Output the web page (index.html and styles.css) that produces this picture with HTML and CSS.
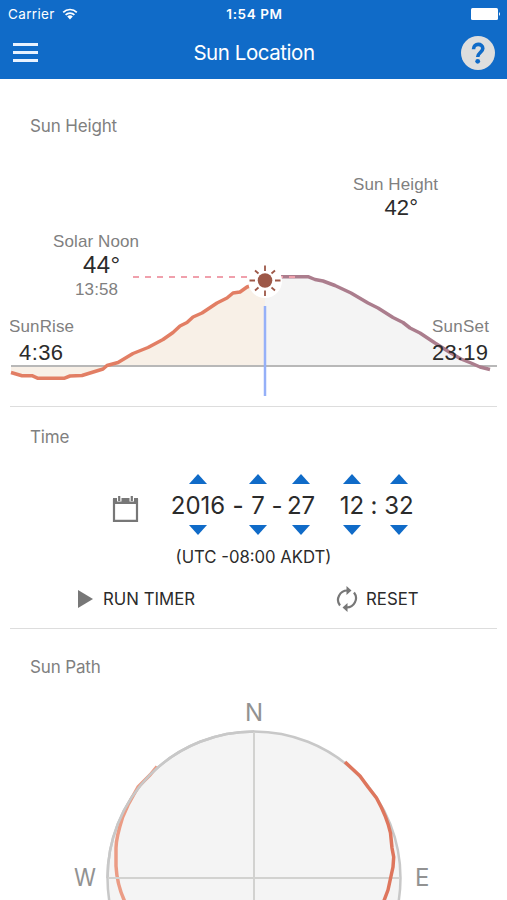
FILE: index.html
```html
<!DOCTYPE html>
<html lang="en">
<head>
    <meta charset="UTF-8">
    <meta name="viewport" content="width=device-width, initial-scale=1.0">
    <title>Sun Location</title>
    <link rel="stylesheet" href="styles.css">
</head>
<body>
    <header>
        <div class="status-bar">
            <div class="carrier">
                <span>Carrier</span>
                <svg width="16" height="12" viewBox="0 0 16 12">
                    <path d="M1.2 4.3a9.6 9.6 0 0 1 13.6 0M3.6 6.9a6.2 6.2 0 0 1 8.8 0" fill="none" stroke="#fff" stroke-width="1.7"/>
                    <path d="M5.2 8.6a4 4 0 0 1 5.6 0L8 11.4z" fill="#fff"/>
                </svg>
            </div>
            <span class="clock">1:54 PM</span>
            <svg class="battery" width="30" height="12" viewBox="0 0 30 12">
                <rect width="27" height="12" rx="1.5" fill="#fff"/>
                <path d="M28 4q2 2 0 4z" fill="#fff"/>
            </svg>
        </div>
        <nav class="nav-bar">
            <button class="menu-btn" aria-label="Menu"><span></span><span></span><span></span></button>
            <h1>Sun Location</h1>
            <button class="help-btn" aria-label="Help">
                <svg width="34" height="34" viewBox="0 0 34 34">
                    <circle cx="17" cy="17" r="17" fill="#dedede"/>
                    <path d="M12.500 13.200C12.500 6.800 21.800 7 21.800 12.500c0 3.500-4.800 4-5.100 8.500" fill="none" stroke="#106bc8" stroke-width="3.600"/>
                    <circle cx="16.700" cy="25.300" r="2.400" fill="#106bc8"/>
                </svg>
            </button>
        </nav>
    </header>

    <main>
        <section class="height-section">
            <h2>Sun Height</h2>
            <svg class="height-chart" width="487" height="256" viewBox="10 150 487 256">
                <!-- day area, before and after the current time -->
                <path class="area-past" d="M11 366V372L22 375.500 32 375.500 38 378.300H64L70 376 82 375.500 103 369 107 365.500 118 362.500 133 353.500 148 347.500 163 339.500 173 332.500 180 326 187 322.500 193 317 202 313 217 303 227 298 233 293 240 292 247 287 254 284.500H265V366z"/>
                <path class="area-next" d="M265 277H308L315 279.500 323 281 335 285.500 351 293 368 303 378 308 393 317.500 403 322.500 410 328 420 333 435 343 450 352.500 461 359 471 363 478 366H265z"/>
                <path class="horizon" d="M11 366H497"/>
                <path class="curve-past" d="M11 372.500L22 375.700 32 375.700 38 378.300H64L70 376 82 375.500 103 369 107 365.500 118 362.500 133 353.500 148 347.500 163 339.500 173 332.500 180 326 187 322.500 193 317 202 313 217 303 227 298 233 293 240 292 247 287 254 284.500"/>
                <path class="curve-next" d="M280 276.700H308L315 279.500 323 281 335 285.500 351 293 368 303 378 308 393 317.500 403 322.500 410 328 420 333 435 343 450 352.500 461 359 471 363 480 367 490 369.500"/>
                <path class="noon-line" d="M133 277H296"/>
                <path class="now-line" d="M265 306V396"/>
                <circle cx="265" cy="281" r="17" fill="#fff"/>
                <circle cx="265" cy="280.500" r="7.300" fill="#9d5848"/>
                <path class="rays" d="M265 265.500v5.500M265 290.500v5.500M249.500 280.500h5.500M275 280.500h5.500M255 270.500l3.500 3M275 270.500l-3.500 3M255 290.500l3.500-3M275 290.500l-3.500-3"/>
                <text class="label" x="353" y="190" textLength="85">Sun Height</text>
                <text class="value" x="384.500" y="215" textLength="33.500">42°</text>
                <text class="label" x="53" y="246.500" textLength="86">Solar Noon</text>
                <text class="value noon" x="83" y="273" textLength="37">44°</text>
                <text class="label" x="75" y="295" textLength="43">13:58</text>
                <text class="label" x="9" y="332" textLength="65">SunRise</text>
                <text class="value" x="19" y="360" textLength="44">4:36</text>
                <text class="label" x="432" y="332" textLength="57">SunSet</text>
                <text class="value" x="432" y="360" textLength="56">23:19</text>
            </svg>
        </section>

        <section class="time-section">
            <h2>Time</h2>
            <div class="picker">
                <svg class="calendar" width="27" height="28" viewBox="0 0 27 28">
                    <path d="M2 4V25.800H25V4" fill="none" stroke="#777" stroke-width="2.200"/>
                    <path d="M1 3h4v3.500h4.500V3h8v3.500H22V3h4v6H1z" fill="#777"/>
                    <path d="M7.200 1v5M19.800 1v5" stroke="#777" stroke-width="2.200"/>
                </svg>
                <div class="stepper year"><i class="up"></i><span>2016</span><i class="down"></i></div>
                <span class="sep wide">-</span>
                <div class="stepper month"><i class="up"></i><span>7</span><i class="down"></i></div>
                <span class="sep">-</span>
                <div class="stepper day"><i class="up"></i><span>27</span><i class="down"></i></div>
                <div class="stepper hour"><i class="up"></i><span>12</span><i class="down"></i></div>
                <span class="sep colon">:</span>
                <div class="stepper minute"><i class="up"></i><span>32</span><i class="down"></i></div>
            </div>
            <p class="timezone">(UTC -08:00 AKDT)</p>
            <div class="actions">
                <button class="run-btn">
                    <svg width="15" height="18" viewBox="0 0 15 18"><path d="M0 0L15 9 0 18z" fill="#777"/></svg>
                    <span>RUN TIMER</span>
                </button>
                <button class="reset-btn">
                    <svg width="22" height="28" viewBox="0 0 22 28">
                        <path d="M4 20.500A9.300 9.300 0 0 1 11.500 5.500M18 7.500A9.300 9.300 0 0 1 10.500 22.500" fill="none" stroke="#777" stroke-width="2.200"/>
                        <path d="M10.500 1l5 4.500-5 4.500zM11.500 18l-5 4.500 5 4.500z" fill="#777"/>
                    </svg>
                    <span>RESET</span>
                </button>
            </div>
        </section>

        <section class="path-section">
            <h2>Sun Path</h2>
            <svg class="path-chart" width="487" height="220" viewBox="10 680 487 220">
                <circle class="compass" cx="254" cy="878" r="146.500"/>
                <path class="track-set" d="M157 766.500L150 775 138 787 128 805 122.700 817Q116 838 116 848V866Q117 885 125 902"/>
                <path class="compass-top" d="M107.500 878A146.500 146.500 0 0 1 254 731.500"/>
                <path class="compass-axis" d="M254 732V900M108 878H400"/>
                <path class="track-rise" d="M345 762L360 776 368 787 376.500 798Q387 817 390.500 833L392 848 393.700 857 393 867 388 890 383.500 902"/>
                <text x="245" y="721" textLength="17">N</text>
                <text x="74" y="885.500" textLength="22" lengthAdjust="spacingAndGlyphs">W</text>
                <text x="415" y="885.500" textLength="14">E</text>
            </svg>
        </section>
    </main>
</body>
</html>
```
FILE: styles.css
```css
body {
    font-family: 'Inter', sans-serif;
    background: #fff;
    color: #2b2b2b;
    margin: 0;
    height: 900px;
    overflow: hidden;
}

button {
    background: none;
    border: none;
    padding: 0;
    font-family: inherit;
    color: inherit;
}

svg {
    display: block;
}

header {
    background: #106bc8;
    color: #fff;
    height: 79px;
}

.status-bar {
    display: grid;
    grid-template-columns: 1fr auto 1fr;
    align-items: center;
    height: 28px;
    padding: 0 6px 0 8px;
    font-size: 13.5px;
}

.carrier {
    display: flex;
    align-items: center;
    gap: 7px;
    letter-spacing: 0.35px;
}

.clock {
    font-size: 13.5px;
    font-weight: 600;
    letter-spacing: 0.6px;
}

.battery {
    justify-self: end;
}

.nav-bar {
    display: flex;
    align-items: center;
    justify-content: space-between;
    height: 49px;
    padding: 0 12px 0 13px;
}

.menu-btn {
    display: flex;
    flex-direction: column;
    gap: 5px;
    width: 34px;
}

.menu-btn span {
    width: 25px;
    height: 3px;
    background: #e8f2ff;
}

h1 {
    margin: 0;
    font-size: 20.5px;
    font-weight: 400;
    letter-spacing: -0.45px;
}

main {
    padding: 0 10px;
}

section {
    box-sizing: border-box;
}

h2 {
    margin: 0;
    padding-left: 20px;
    font-size: 17px;
    font-weight: 400;
    letter-spacing: -0.15px;
    line-height: 20px;
    color: #808080;
}

.height-section {
    height: 328px;
    padding-top: 37px;
    border-bottom: 1px solid #ddd;
}

.height-chart {
    margin-top: 14px;
}

.height-chart text {
    font-family: 'Liberation Sans', Arial, sans-serif;
}

.height-chart .label {
    font-size: 17px;
    fill: #808080;
}

.height-chart .value {
    font-size: 22px;
    fill: #2b2b2b;
}

.height-chart .noon {
    font-size: 24px;
}

.area-past {
    fill: #f8f0e7;
}

.area-next {
    fill: #f4f4f4;
}

.horizon {
    stroke: #b8b8b8;
    stroke-width: 2;
}

.noon-line {
    fill: none;
    stroke: #f0a0ac;
    stroke-width: 2;
    stroke-dasharray: 6 6;
}

.curve-past, .curve-next {
    fill: none;
    stroke: #e27e64;
    stroke-width: 3.5;
    stroke-linejoin: round;
}

.curve-next {
    stroke: #ab7d8d;
}

.now-line {
    stroke: #95b0f8;
    stroke-width: 2.5;
}

.rays {
    stroke: #9d5848;
    stroke-width: 1.8;
}

.time-section {
    height: 222px;
    padding-top: 20px;
    border-bottom: 1px solid #ddd;
}

.picker {
    display: flex;
    align-items: center;
    height: 61px;
    margin-top: 27px;
    padding-left: 102px;
    font-size: 24px;
}

.calendar {
    margin: 9px 31px 0 0;
}

.stepper {
    display: flex;
    flex-direction: column;
    align-items: center;
    justify-content: space-between;
    height: 61px;
    width: 26px;
    line-height: 30px;
}

.stepper span, .sep {
    padding-top: 2px;
}

.stepper.year {
    width: 56px;
}

.stepper.month {
    width: 16px;
}

.stepper.hour {
    width: 24px;
    margin-left: 26px;
}

.stepper.minute {
    width: 30px;
}

.up, .down {
    border-left: 9px solid transparent;
    border-right: 9px solid transparent;
}

.up {
    border-bottom: 10px solid #106bc8;
}

.down {
    border-top: 10px solid #106bc8;
}

.sep {
    width: 22px;
    text-align: center;
}

.sep.wide {
    width: 24px;
    font-weight: 500;
}

.sep.colon {
    width: 20px;
}

.timezone {
    margin: 12px 0 0;
    text-align: center;
    font-size: 16.7px;
    line-height: 20px;
}

.actions {
    display: flex;
    margin-top: 17px;
    padding-left: 68px;
}

.actions button {
    display: flex;
    align-items: center;
    height: 29px;
    font-size: 16.8px;
}

.run-btn {
    width: 258px;
    gap: 10px;
}

.reset-btn {
    gap: 8px;
}

.path-section {
    padding-top: 28px;
}

.path-chart {
    margin-top: 3px;
}

.path-chart text {
    font-size: 24px;
    fill: #929292;
}

.compass {
    fill: #f4f4f4;
    stroke: #c8c8c8;
    stroke-width: 2.5;
}

.compass-top {
    fill: none;
    stroke: #c8c8c8;
    stroke-width: 2.5;
}

.compass-axis {
    stroke: #d2d2d0;
    stroke-width: 2;
}

.track-set, .track-rise {
    fill: none;
    stroke: #eb9c85;
    stroke-width: 3.5;
    stroke-linejoin: round;
}

.track-rise {
    stroke: #de765d;
}
```
